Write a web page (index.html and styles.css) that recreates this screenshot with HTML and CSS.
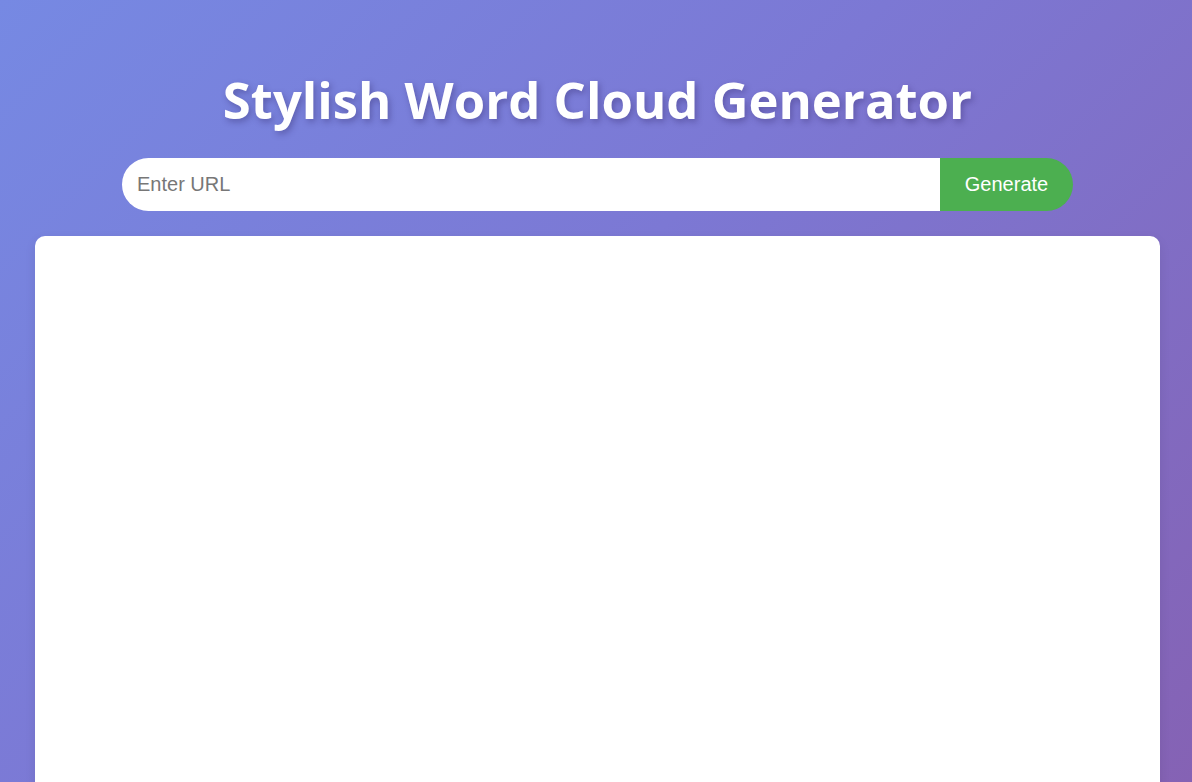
FILE: index.html
```html
<!DOCTYPE html>
<html>
<head>
<meta charset="utf-8">
<link rel="stylesheet" href="styles.css">
</head>
<body>
<div class="page">
  <h1 class="title">Stylish Word Cloud Generator</h1>
  <form class="url-form">
    <input class="url-input" type="text" placeholder="Enter URL">
    <button class="gen-btn" type="button">Generate</button>
  </form>
  <div class="cloud-card"></div>
</div>
</body>
</html>
```
FILE: styles.css
```css
html, body {
  margin: 0;
  padding: 0;
  height: 100%;
  overflow: hidden;
}
body {
  background: linear-gradient(135deg, #7689e3 0%, #7c78d4 45%, #8562b4 100%);
  font-family: "Liberation Sans", Arial, sans-serif;
}
.page {
  display: flex;
  flex-direction: column;
  align-items: center;
  padding: 68px 32px 0 35px;
}
.title {
  margin: 0;
  font-family: "Open Sans", "Noto Sans", sans-serif;
  font-weight: 700;
  font-size: 50.8px;
  line-height: 64px;
  color: #fff;
  text-shadow: 2px 3px 6px rgba(40, 30, 90, 0.35);
}
.url-form {
  display: flex;
  width: 951px;
  margin-top: 26px;
}
.url-input {
  flex: 1;
  height: 53px;
  box-sizing: border-box;
  border: none;
  outline: none;
  border-radius: 27px 0 0 27px;
  padding: 0 15px;
  font-family: "Liberation Sans", Arial, sans-serif;
  font-size: 20px;
  background: #fff;
  color: #333;
}
.url-input::placeholder {
  color: #777;
}
.gen-btn {
  width: 133px;
  height: 53px;
  border: none;
  border-radius: 0 27px 27px 0;
  background: #4caf50;
  color: #fff;
  font-family: "Liberation Sans", Arial, sans-serif;
  font-size: 20px;
  padding: 0;
  cursor: pointer;
}
.cloud-card {
  align-self: stretch;
  margin-top: 25px;
  height: 600px;
  background: #fff;
  border-radius: 10px;
  box-shadow: 0 4px 12px rgba(0, 0, 0, 0.08);
}
```
